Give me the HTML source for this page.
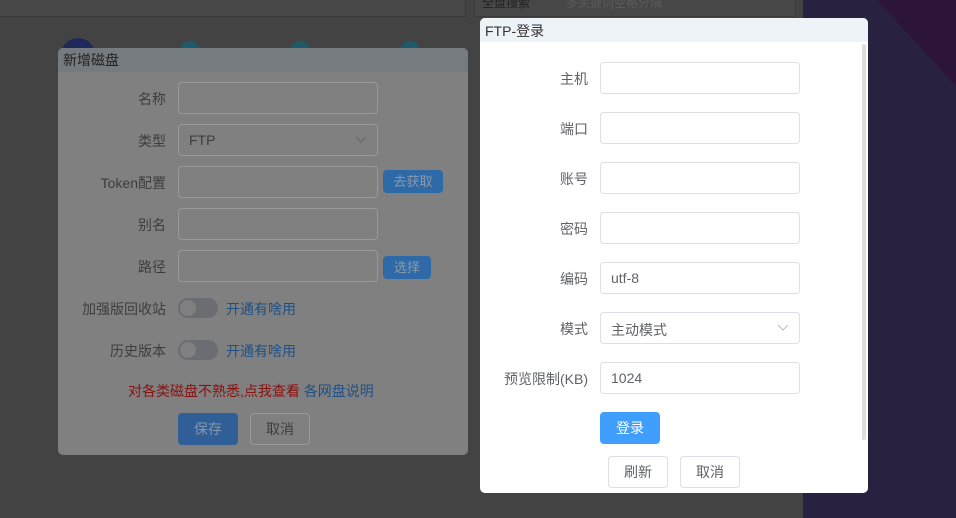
<!DOCTYPE html>
<html><head><meta charset="utf-8"><style>
*{box-sizing:border-box;margin:0;padding:0}
body{width:956px;height:518px;overflow:hidden;background:#434343;position:relative;font-family:"Liberation Sans","Noto Sans CJK SC",sans-serif;font-size:14px}
.abs{position:absolute}
.right{left:803px;top:0;width:153px;height:518px;background:#28213f;overflow:hidden}
.lbl{position:absolute;text-align:right;white-space:nowrap}
.inp{position:absolute;border:1px solid;border-radius:4px}
.btn{position:absolute;border-radius:4px;text-align:center;font-size:14px}
</style></head><body>
<div class="abs right"><svg width="153" height="518" style="position:absolute;left:0;top:0"><polygon points="74,0 153,0 153,86" fill="#2c1539"/></svg></div>
<!-- top bar -->
<div class="abs" style="left:0;top:0;width:466px;height:17px;border-bottom:1px solid #3a3a3a;border-right:1px solid #3a3a3a;background:#474747"></div>
<div class="abs" style="left:474px;top:0;width:322px;height:17px;border:1px solid #3a3a3a;border-top:none;background:#474747"></div>
<div class="abs" style="left:482px;top:-6px;font-size:12px;color:#222">全盘搜索</div>
<div class="abs" style="left:566px;top:-6px;font-size:12px;color:#5a5a5a">多关键词空格分隔</div>
<!-- bg circles -->
<div class="abs" style="left:61px;top:38px;width:34px;height:34px;border-radius:50%;background:#1f2a5a"></div>
<div class="abs" style="left:180px;top:41px;width:20px;height:20px;border-radius:50%;background:#1e5a6a"></div>
<div class="abs" style="left:290px;top:41px;width:20px;height:20px;border-radius:50%;background:#1e5a6a"></div>
<div class="abs" style="left:400px;top:41px;width:20px;height:20px;border-radius:50%;background:#1e5a6a"></div>

<!-- left dialog -->
<div class="abs" style="left:58px;top:48px;width:410px;height:407px;background:#808080;border-radius:5px;overflow:hidden">
  <div style="height:24px;background:#767b80;color:#222;padding:2px 0 0 5px;font-size:14px">新增磁盘</div>
</div>
<div style="color:#3d3d3d">
<div class="lbl" style="right:790px;top:89px">名称</div>
<div class="lbl" style="right:790px;top:131px">类型</div>
<div class="lbl" style="right:790px;top:173px">Token配置</div>
<div class="lbl" style="right:790px;top:215px">别名</div>
<div class="lbl" style="right:790px;top:257px">路径</div>
<div class="lbl" style="right:790px;top:299px">加强版回收站</div>
<div class="lbl" style="right:790px;top:341px">历史版本</div>
</div>
<div class="inp" style="left:178px;top:82px;width:200px;height:32px;border-color:#999"></div>
<div class="inp" style="left:178px;top:124px;width:200px;height:32px;border-color:#999"><span style="position:absolute;left:10px;top:7px;color:#3d3d3d">FTP</span><svg style="position:absolute;right:10px;top:11px" width="12" height="8"><path d="M1 1L6 6L11 1" stroke="#666" fill="none"/></svg></div>
<div class="inp" style="left:178px;top:166px;width:200px;height:32px;border-color:#999"></div>
<div class="inp" style="left:178px;top:208px;width:200px;height:32px;border-color:#999"></div>
<div class="inp" style="left:178px;top:250px;width:200px;height:32px;border-color:#999"></div>
<div class="btn" style="left:383px;top:170px;width:60px;height:23px;background:#2f6aa8;color:#8a9aac;font-size:13px;line-height:23px">去获取</div>
<div class="btn" style="left:383px;top:256px;width:48px;height:23px;background:#2f6aa8;color:#8a9aac;font-size:13px;line-height:23px">选择</div>
<div class="abs" style="left:178px;top:298px;width:40px;height:20px;border-radius:10px;background:#6c6d72"><div style="position:absolute;left:2px;top:2px;width:16px;height:16px;border-radius:50%;background:#808080"></div></div>
<div class="abs" style="left:226px;top:299px;color:#1f4f85">开通有啥用</div>
<div class="abs" style="left:178px;top:340px;width:40px;height:20px;border-radius:10px;background:#6c6d72"><div style="position:absolute;left:2px;top:2px;width:16px;height:16px;border-radius:50%;background:#808080"></div></div>
<div class="abs" style="left:226px;top:341px;color:#1f4f85">开通有啥用</div>
<div class="abs" style="left:128px;top:381px;color:#8a1010">对各类磁盘不熟悉,点我查看 <span style="color:#1f4f85">各网盘说明</span></div>
<div class="btn" style="left:178px;top:413px;width:60px;height:32px;background:#2f5f96;color:#8597ab;line-height:32px">保存</div>
<div class="btn" style="left:250px;top:413px;width:60px;height:32px;border:1px solid #999;color:#3d3d3d;line-height:30px">取消</div>

<!-- FTP dialog -->
<div class="abs" style="left:480px;top:18px;width:388px;height:475px;background:#fff;border-radius:5px;overflow:hidden">
  <div style="height:24px;background:#eef3f8;color:#333;padding:3px 0 0 5px;font-size:14px">FTP-登录</div>
  <div style="position:absolute;left:382px;top:26px;width:4px;height:396px;background:#ddd;border-radius:2px"></div>
</div>
<div style="color:#606266">
<div class="lbl" style="right:368px;top:69px">主机</div>
<div class="lbl" style="right:368px;top:119px">端口</div>
<div class="lbl" style="right:368px;top:169px">账号</div>
<div class="lbl" style="right:368px;top:219px">密码</div>
<div class="lbl" style="right:368px;top:269px">编码</div>
<div class="lbl" style="right:368px;top:319px">模式</div>
<div class="lbl" style="right:368px;top:369px">预览限制(KB)</div>
</div>
<div class="inp" style="left:600px;top:62px;width:200px;height:32px;border-color:#dcdfe6"></div>
<div class="inp" style="left:600px;top:112px;width:200px;height:32px;border-color:#dcdfe6"></div>
<div class="inp" style="left:600px;top:162px;width:200px;height:32px;border-color:#dcdfe6"></div>
<div class="inp" style="left:600px;top:212px;width:200px;height:32px;border-color:#dcdfe6"></div>
<div class="inp" style="left:600px;top:262px;width:200px;height:32px;border-color:#dcdfe6"><span style="position:absolute;left:10px;top:7px;color:#606266">utf-8</span></div>
<div class="inp" style="left:600px;top:312px;width:200px;height:32px;border-color:#dcdfe6"><span style="position:absolute;left:10px;top:7px;color:#606266">主动模式</span><svg style="position:absolute;right:10px;top:11px" width="12" height="8"><path d="M1 1L6 6L11 1" stroke="#bbb" fill="none"/></svg></div>
<div class="inp" style="left:600px;top:362px;width:200px;height:32px;border-color:#dcdfe6"><span style="position:absolute;left:10px;top:7px;color:#606266">1024</span></div>
<div class="btn" style="left:600px;top:412px;width:60px;height:32px;background:#409eff;color:#fff;line-height:32px">登录</div>
<div class="btn" style="left:608px;top:456px;width:60px;height:32px;border:1px solid #dcdfe6;color:#606266;line-height:30px">刷新</div>
<div class="btn" style="left:680px;top:456px;width:60px;height:32px;border:1px solid #dcdfe6;color:#606266;line-height:30px">取消</div>
</body></html>
